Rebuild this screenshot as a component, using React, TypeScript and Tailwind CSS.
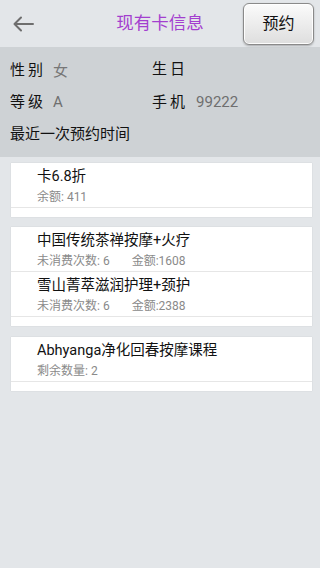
import React from "react";

const font = { fontFamily: 'Roboto, "Noto Sans CJK SC", sans-serif' };

function Row({ title, sub }: { title: string; sub: React.ReactNode }) {
  return (
    <div className="h-[45px] border-b border-[#e6e6e6] pl-[26px] pt-[4px]">
      <div className="h-[20px] leading-[20px] text-[14.5px] text-[#111]">{title}</div>
      <div className="mt-[2px] h-[16px] leading-[16px] text-[12px] text-[#8a8a8a]">{sub}</div>
    </div>
  );
}

function Card({ children }: { children: React.ReactNode }) {
  return (
    <div className="ml-[11px] mr-[8px] bg-white pb-[9px] shadow-[0_0_1px_rgba(0,0,0,0.15)]">{children}</div>
  );
}

export default function App() {
  return (
    <div className="w-[320px] h-[568px] bg-[#e3e6e9] overflow-hidden" style={font}>
      <header className="h-[47px] grid grid-cols-[1fr_auto_1fr] items-center">
        <div className="pl-[13px] flex items-center">
          <svg width="21" height="16" viewBox="0 0 21 16" fill="none" stroke="#6e6e6e" strokeWidth="2" strokeLinecap="round" strokeLinejoin="round">
            <path d="M20 8H1.5M8 1.5L1.5 8L8 14.5" />
          </svg>
        </div>
        <div className="text-[17.5px] text-[#a33fcf] leading-none">现有卡信息</div>
        <div className="flex justify-end pr-[6px]">
          <div className="w-[71px] h-[42px] rounded-[6px] border border-[#8a8a8a] bg-gradient-to-b from-[#fbfbfb] to-[#dedede] shadow-[inset_0_0_0_1px_rgba(255,255,255,0.9),0_1px_2px_rgba(0,0,0,0.25)] flex items-center justify-center text-[16px] text-[#111]">
            预约
          </div>
        </div>
      </header>

      <section className="h-[110px] bg-[#ced2d5] pl-[10px] pt-[7px] text-[15px] text-[#111]">
        <div className="h-[32px] grid grid-cols-[142px_1fr] items-center">
          <div className="flex items-center">
            <span className="tracking-[3px]">性别</span>
            <span className="ml-[7px] text-[#777] mt-[3px]">女</span>
          </div>
          <div className="flex items-center -mt-[2px]">
            <span className="tracking-[3px]">生日</span>
          </div>
        </div>
        <div className="h-[32px] grid grid-cols-[142px_1fr] items-center">
          <div className="flex items-center">
            <span className="tracking-[3px]">等级</span>
            <span className="ml-[7px] text-[#6f6f6f]">A</span>
          </div>
          <div className="flex items-center">
            <span className="tracking-[3px]">手机</span>
            <span className="ml-[8px] text-[#6f6f6f]">99222</span>
          </div>
        </div>
        <div className="h-[33px] flex items-center">最近一次预约时间</div>
      </section>

      <div className="mt-[6px]">
        <Card>
          <Row title="卡6.8折" sub="余额: 411" />
        </Card>
      </div>
      <div className="mt-[10px]">
        <Card>
          <Row
            title="中国传统茶禅按摩+火疗"
            sub={
              <span>
                未消费次数: 6<span className="ml-[22px]">金额:1608</span>
              </span>
            }
          />
          <Row
            title="雪山菁萃滋润护理+颈护"
            sub={
              <span>
                未消费次数: 6<span className="ml-[22px]">金额:2388</span>
              </span>
            }
          />
        </Card>
      </div>
      <div className="mt-[11px]">
        <Card>
          <Row title="Abhyanga净化回春按摩课程" sub="剩余数量: 2" />
        </Card>
      </div>
    </div>
  );
}
